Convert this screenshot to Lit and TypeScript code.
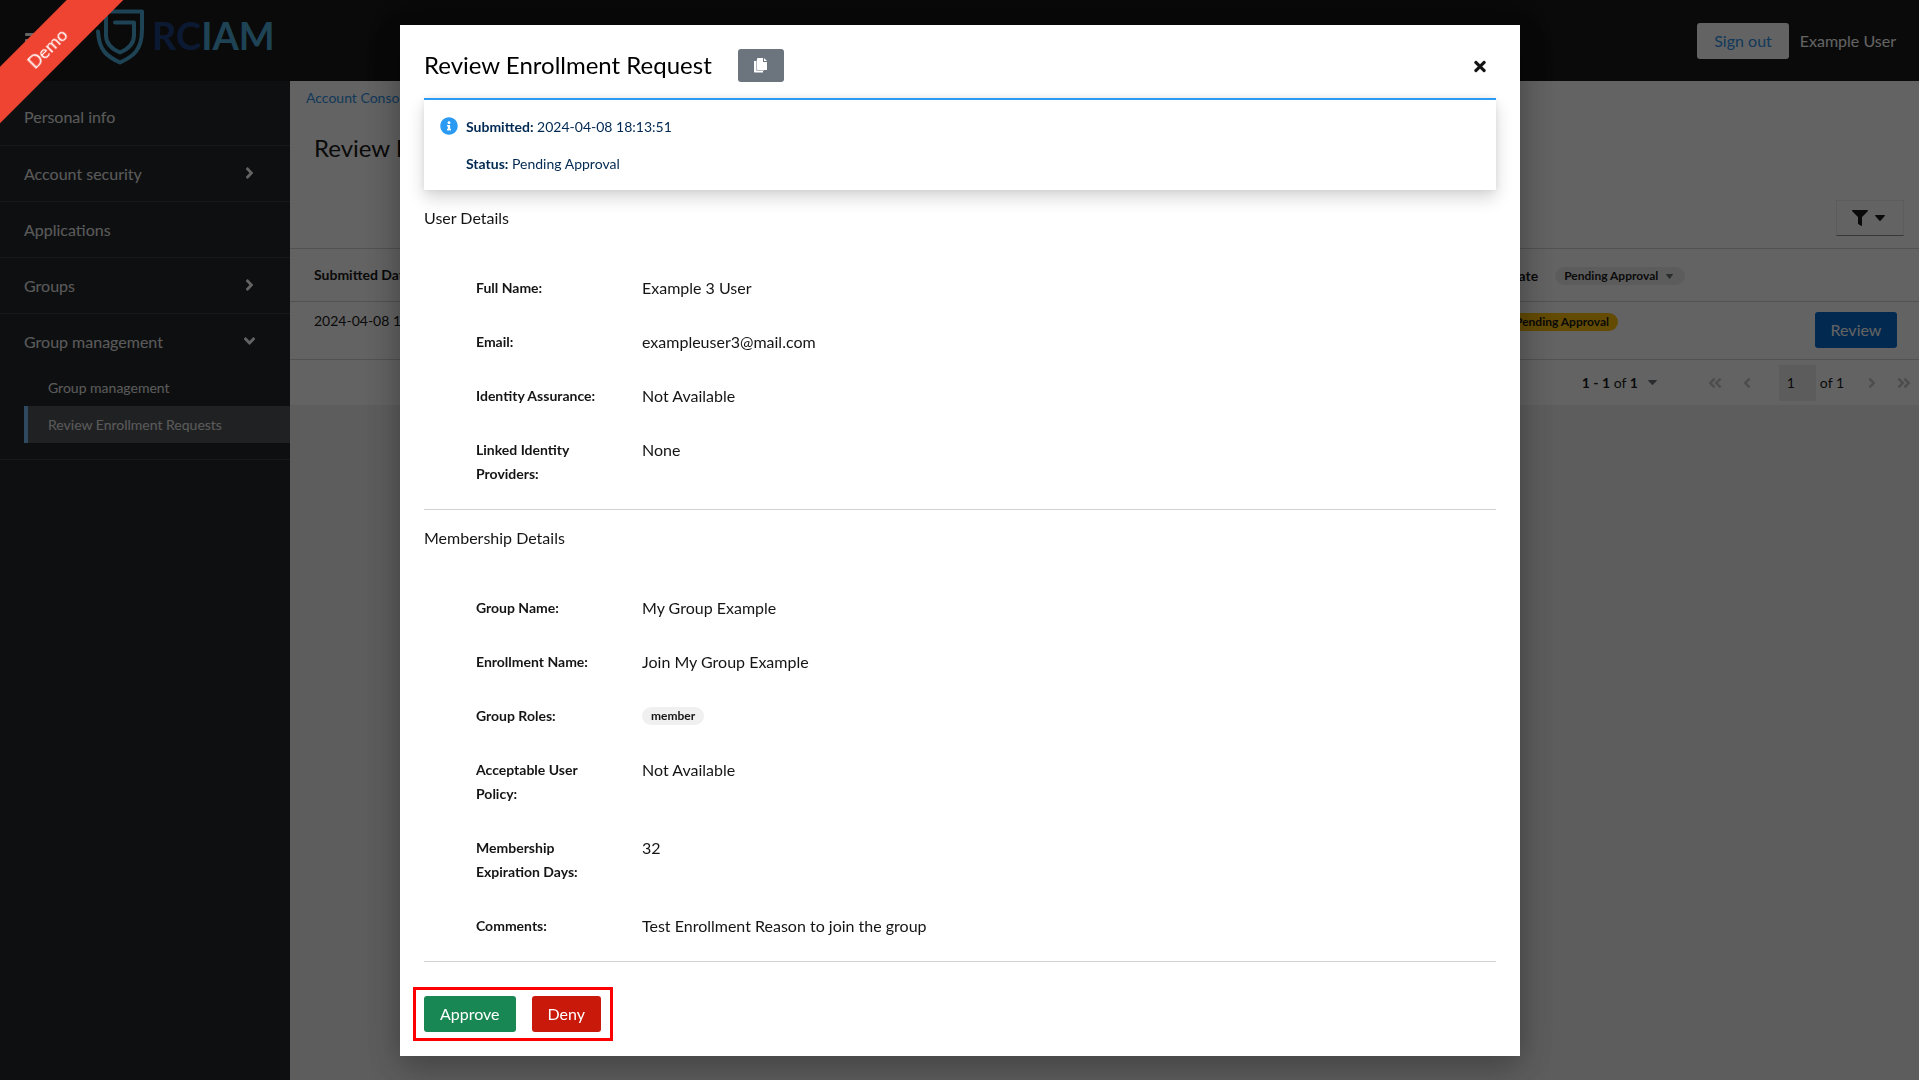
import { LitElement, html, css, svg } from "lit";
import { customElement } from "lit/decorators.js";
import { classMap } from "lit/directives/class-map.js";

const ANGLE =
  "M224.3 273l-136 136c-9.4 9.4-24.6 9.4-33.9 0l-22.6-22.6c-9.4-9.4-9.4-24.6 0-33.9l96.4-96.4-96.4-96.4c-9.4-9.4-9.4-24.6 0-33.9L54.3 103c9.4-9.4 24.6-9.4 33.9 0l136 136c9.5 9.4 9.5 24.6.1 34z";
const DOUBLE_ANGLE =
  "M223.7 239l136-136c9.4-9.4 24.6-9.4 33.9 0l22.6 22.6c9.4 9.4 9.4 24.6 0 33.9L319.9 256l96.4 96.4c9.4 9.4 9.4 24.6 0 33.9L393.7 409c-9.4 9.4-24.6 9.4-33.9 0l-136-136c-9.5-9.4-9.5-24.6-.1-34zm-192 34l136 136c9.4 9.4 24.6 9.4 33.9 0l22.6-22.6c9.4-9.4 9.4-24.6 0-33.9L127.9 256l96.4-96.4c9.4-9.4 9.4-24.6 0-33.9L201.7 103c-9.4-9.4-24.6-9.4-33.9 0l-136 136c-9.5 9.4-9.5 24.6-.1 34z";
const FILTER =
  "M487.976 0H24.028C2.71 0-8.047 25.866 7.058 40.971L192 225.941V432c0 7.831 3.821 15.17 10.237 19.662l80 55.98C298.02 518.69 320 507.493 320 487.98V225.941l184.947-184.97C520.021 25.896 509.338 0 487.976 0z";
const INFO =
  "M256 8C119.043 8 8 119.083 8 256c0 136.997 111.043 248 248 248s248-111.003 248-248C504 119.083 392.957 8 256 8zm0 110c23.196 0 42 18.804 42 42s-18.804 42-42 42-42-18.804-42-42 18.804-42 42-42zm56 254c0 6.627-5.373 12-12 12h-88c-6.627 0-12-5.373-12-12v-24c0-6.627 5.373-12 12-12h12v-64h-12c-6.627 0-12-5.373-12-12v-24c0-6.627 5.373-12 12-12h64c6.627 0 12 5.373 12 12v100h12c6.627 0 12 5.373 12 12v24z";
const TIMES =
  "M242.72 256l100.07-100.07c12.28-12.28 12.28-32.19 0-44.48l-22.24-22.24c-12.28-12.28-32.19-12.28-44.48 0L176 189.28 75.93 89.21c-12.28-12.28-32.19-12.28-44.48 0L9.21 111.45c-12.28 12.28-12.28 32.19 0 44.48L109.28 256 9.21 356.07c-12.28 12.28-12.28 32.19 0 44.48l22.24 22.24c12.28 12.28 32.2 12.28 44.48 0L176 322.72l100.07 100.07c12.28 12.28 32.2 12.28 44.48 0l22.24-22.24c12.28-12.28 12.28-32.19 0-44.48L242.72 256z";

const icon = (path: string, w: number, h: number, vw: number, cls = "") => html`
  <svg class="icon ${cls}" width=${w} height=${h} viewBox="0 0 ${vw} 512" aria-hidden="true">
    ${svg`<path d=${path}></path>`}
  </svg>`;

const caret = (w: number, h: number) => html`
  <svg class="icon" width=${w} height=${h} viewBox="0 0 10 6" preserveAspectRatio="none" aria-hidden="true">
    ${svg`<path d="M.6 0h8.8q.9.3.3 1L5.5 5.7q-.5.5-1 0L.3 1Q-.3.3.6 0z"></path>`}
  </svg>`;

const reset = css`
  * {
    box-sizing: border-box;
    margin: 0;
  }
  ul {
    list-style: none;
    padding: 0;
  }
  a {
    color: inherit;
    text-decoration: none;
  }
  button,
  input {
    font: inherit;
    color: inherit;
    border: 0;
    background: none;
    padding: 0;
  }
  .icon {
    display: block;
    flex: none;
    fill: currentColor;
  }
`;

@customElement("app-header")
class AppHeader extends LitElement {
  static styles = [
    reset,
    css`
      :host {
        display: block;
      }
      .bar {
        display: flex;
        align-items: center;
        justify-content: space-between;
        height: 81px;
        padding: 0 23px 0 24px;
        background: #151515;
        color: #fff;
      }
      .side {
        display: flex;
        align-items: center;
      }
      .burger {
        width: 18px;
        height: 16px;
        margin-right: 53px;
      }
      .logo {
        display: flex;
        align-items: center;
        margin-bottom: 8px;
        color: #4aaad8;
      }
      .shield {
        display: block;
        fill: none;
        stroke: #4aaad8;
        stroke-width: 4;
        stroke-linecap: round;
        stroke-linejoin: round;
      }
      .word {
        margin: 0 0 4px 5px;
        font: 700 38px/48px Lato, sans-serif;
      }
      .deep {
        color: #1c3d82;
      }
      .out {
        height: 36px;
        padding: 0 17px;
        border-radius: 3px;
        background: #fff;
        color: #2b8fe8;
      }
      .user {
        margin-left: 11px;
      }
    `,
  ];
  render() {
    return html`
      <header class="bar">
        <div class="side">
          <button class="burger" aria-label="Menu">
            <svg class="icon" width="18" height="16" viewBox="0 0 18 16">
              <rect x="1" y="0" width="16" height="3" rx="1"></rect>
              <rect x="1" y="6" width="16" height="3" rx="1"></rect>
              <rect x="1" y="12" width="16" height="3" rx="1"></rect>
            </svg>
          </button>
          <a class="logo" href="#home" aria-label="RCIAM">
            <svg class="shield" width="52" height="58" viewBox="0 0 52 58" aria-hidden="true">
              <path d="M20 14.500h19v13q0 11-14 17-14-6-14-17v-24h36v18c0 21-9 27-22 33-13-6-21-12-22-31"></path>
            </svg>
            <span class="word"><span class="deep">RC</span>IAM</span>
          </a>
        </div>
        <div class="side">
          <button class="out">Sign out</button>
          <span class="user">Example User</span>
        </div>
      </header>
    `;
  }
}

type NavEntry = { label: string; open?: boolean; group?: boolean; children?: { label: string; current?: boolean }[] };

const NAV: NavEntry[] = [
  { label: "Personal info" },
  { label: "Account security", group: true },
  { label: "Applications" },
  { label: "Groups", group: true },
  {
    label: "Group management",
    group: true,
    open: true,
    children: [{ label: "Group management" }, { label: "Review Enrollment Requests", current: true }],
  },
];

@customElement("app-nav")
class AppNav extends LitElement {
  static styles = [
    reset,
    css`
      :host {
        display: block;
        width: 290px;
        flex: none;
        padding-top: 8px;
        background: #212427;
        color: #e8e8e8;
      }
      .item {
        border-bottom: 1px solid #3a3d40;
      }
      .row {
        display: flex;
        align-items: center;
        justify-content: space-between;
        width: 100%;
        height: 55px;
        padding: 0 33px 0 24px;
      }
      .item:first-child .row {
        height: 56px;
      }
      .mark {
        width: 16px;
        display: grid;
        place-items: center;
        color: #fff;
        padding-bottom: 2px;
      }
      .down {
        transform: rotate(90deg);
      }
      .sub {
        padding: 0 0 16px 24px;
        font-size: 14px;
      }
      .leaf {
        display: flex;
        align-items: center;
        height: 37px;
        padding-left: 20px;
        border-left: 4px solid transparent;
      }
      .current {
        background: #4f5255;
        border-color: #73bcf7;
      }
    `,
  ];
  render() {
    return html`
      <nav>
        <ul>
          ${NAV.map(
            (n) => html`
              <li class="item">
                ${n.group
                  ? html`<button class="row" aria-expanded=${n.open ? "true" : "false"}>
                      ${n.label}<span class="mark">${icon(ANGLE, 9, 18, 256, n.open ? "down" : "")}</span>
                    </button>`
                  : html`<a class="row" href="#page">${n.label}</a>`}
                ${n.children
                  ? html`<ul class="sub">
                      ${n.children.map(
                        (c) => html`<li>
                          <a class=${classMap({ leaf: true, current: !!c.current })} href="#page">${c.label}</a>
                        </li>`
                      )}
                    </ul>`
                  : ""}
              </li>
            `
          )}
        </ul>
      </nav>
    `;
  }
}

@customElement("request-list")
class RequestList extends LitElement {
  static styles = [
    reset,
    css`
      :host {
        display: block;
        flex: 1;
        min-width: 0;
        color: #151515;
      }
      .panel {
        background: #fff;
        font-size: 14px;
      }
      .crumbs {
        padding: 6px 16px 0;
        line-height: 21px;
        color: #2b8fe8;
      }
      .title {
        padding: 23px 24px 0;
        font-size: 24px;
        line-height: 34px;
        font-weight: 400;
      }
      .tools {
        display: flex;
        justify-content: flex-end;
        padding: 35px 15px 12px 24px;
      }
      .filter {
        display: flex;
        align-items: center;
        gap: 7px;
        width: 68px;
        height: 36px;
        padding: 0 0 0 15px;
        border: 1px solid #ececec;
        border-bottom-color: #8a8d90;
      }
      .table {
        width: 100%;
        table-layout: fixed;
        border-collapse: collapse;
      }
      .first {
        width: 280px;
      }
      .state {
        width: 310px;
      }
      .action {
        width: 119px;
      }
      th,
      td {
        border: solid #d2d2d2;
        border-width: 1px 0;
        padding: 0 16px;
        text-align: left;
      }
      th {
        height: 53px;
        font-weight: 700;
        vertical-align: middle;
      }
      td {
        height: 58px;
        padding-top: 9px;
        vertical-align: top;
        line-height: 20px;
      }
      th:first-child,
      td:first-child {
        padding-left: 24px;
      }
      td:last-child {
        padding-right: 22px;
      }
      .head {
        display: flex;
        align-items: center;
        gap: 17px;
        padding-top: 2px;
      }
      .chip {
        display: flex;
        align-items: center;
        gap: 8px;
        height: 18px;
        padding: 0 12px 0 9px;
        border-radius: 9px;
        background: #ededed;
        font-size: 12px;
        font-weight: 700;
      }
      .caret {
        color: #6a6e73;
      }
      .pending {
        display: inline-block;
        height: 18px;
        padding: 0 9px;
        border-radius: 9px;
        background: #ffc107;
        font-size: 12px;
        line-height: 18px;
        font-weight: 700;
      }
      .review {
        display: block;
        height: 36px;
        width: 100%;
        border-radius: 3px;
        background: #06c;
        color: #fff;
        font-size: 16px;
      }
      .last {
        padding: 10px 22px 0 15px;
      }
      .pages {
        display: flex;
        align-items: center;
        justify-content: flex-end;
        height: 45px;
        padding-right: 1px;
      }
      .range {
        display: flex;
        align-items: center;
        gap: 10px;
        margin-right: 44px;
      }
      .step {
        display: grid;
        place-items: center;
        width: 28px;
        height: 36px;
        color: #c4c6c8;
      }
      .step + .step {
        margin-left: 4px;
      }
      .page {
        width: 37px;
        height: 36px;
        margin: 0 4px 0 18px;
        padding-left: 8px;
        background: #ededed;
      }
      .total {
        margin-right: 14px;
      }
      .flip {
        transform: scaleX(-1);
      }
    `,
  ];
  render() {
    return html`
      <main class="panel">
        <nav class="crumbs"><a href="#console">Account Console</a></nav>
        <h1 class="title">Review Enrollment Requests</h1>
        <div class="tools">
          <button class="filter" aria-label="Filter">${icon(FILTER, 16, 16, 512)}${caret(10, 6)}</button>
        </div>
        <table class="table">
          <colgroup>
            <col class="first" />
            <col />
            <col class="state" />
            <col class="action" />
          </colgroup>
          <thead>
            <tr>
              <th>Submitted Date</th>
              <th></th>
              <th>
                <div class="head">
                  State
                  <button class="chip">Pending Approval<span class="caret">${caret(7, 5)}</span></button>
                </div>
              </th>
              <th></th>
            </tr>
          </thead>
          <tbody>
            <tr>
              <td>2024-04-08 18:13:51</td>
              <td></td>
              <td><span class="pending">Pending Approval</span></td>
              <td class="last"><button class="review">Review</button></td>
            </tr>
          </tbody>
        </table>
        <div class="pages">
          <button class="range">
            <span><b>1 - 1</b> of <b>1</b></span><span class="caret">${caret(9, 5)}</span>
          </button>
          <button class="step" aria-label="First page">${icon(DOUBLE_ANGLE, 14, 16, 448)}</button>
          <button class="step" aria-label="Previous page">${icon(ANGLE, 8, 16, 256, "flip")}</button>
          <input class="page" type="text" value="1" aria-label="Page" />
          <span class="total">of 1</span>
          <button class="step" aria-label="Next page">${icon(ANGLE, 8, 16, 256)}</button>
          <button class="step" aria-label="Last page">${icon(DOUBLE_ANGLE, 14, 16, 448, "flip")}</button>
        </div>
      </main>
    `;
  }
}

type Field = { label: string; value: string; badge?: boolean };

const USER: Field[] = [
  { label: "Full Name:", value: "Example 3 User" },
  { label: "Email:", value: "exampleuser3@mail.com" },
  { label: "Identity Assurance:", value: "Not Available" },
  { label: "Linked Identity Providers:", value: "None" },
];

const MEMBERSHIP: Field[] = [
  { label: "Group Name:", value: "My Group Example" },
  { label: "Enrollment Name:", value: "Join My Group Example" },
  { label: "Group Roles:", value: "member", badge: true },
  { label: "Acceptable User Policy:", value: "Not Available" },
  { label: "Membership Expiration Days:", value: "32" },
  { label: "Comments:", value: "Test Enrollment Reason to join the group" },
];

@customElement("review-dialog")
class ReviewDialog extends LitElement {
  static styles = [
    reset,
    css`
      :host {
        display: block;
        width: min(1120px, 100%);
        padding: 24px 24px 15px;
        background: #fff;
        color: #151515;
        box-shadow: 0 16px 32px 0 rgba(3, 3, 3, 0.16), 0 0 32px 0 rgba(3, 3, 3, 0.2);
      }
      .top {
        display: flex;
        align-items: center;
        height: 33px;
        margin: 0 9px 16px 0;
      }
      .title {
        font-size: 24px;
        line-height: 32px;
        font-weight: 400;
        color: #000;
      }
      .copy {
        display: grid;
        place-items: center;
        width: 46px;
        height: 33px;
        margin-left: 26px;
        border-radius: 3px;
        background: #6c757d;
      }
      .close {
        margin-left: auto;
        padding: 3px 1px 0;
      }
      .alert {
        display: flex;
        gap: 8px;
        padding: 16px;
        border-top: 2px solid #2b9af3;
        background: #fff;
        box-shadow: 0 8px 16px 0 rgba(3, 3, 3, 0.16), 0 0 6px 0 rgba(3, 3, 3, 0.08);
        color: #002952;
        font-size: 14px;
        line-height: 21px;
      }
      .alert .icon {
        margin-top: 1px;
        color: #2b9af3;
      }
      .lines {
        display: grid;
        gap: 16px;
      }
      .section {
        padding: 16px 0 23px;
        border-bottom: 1px solid #d2d2d2;
      }
      .name {
        font-size: 16px;
        line-height: 24px;
        font-weight: 400;
      }
      .fields {
        display: grid;
        gap: 30px;
        padding: 46px 0 0 52px;
      }
      .field {
        display: grid;
        grid-template-columns: 136px 1fr;
        column-gap: 30px;
        line-height: 24px;
      }
      dt {
        font-size: 14px;
        font-weight: 700;
      }
      dd {
        display: flex;
        align-items: center;
        height: 24px;
      }
      .badge {
        height: 18px;
        padding: 0 9px;
        border-radius: 9px;
        background: #f0f0f0;
        font-size: 12px;
        line-height: 18px;
        font-weight: 700;
      }
      .actions {
        display: flex;
        gap: 16px;
        width: fit-content;
        margin: 25px 0 0 -11px;
        padding: 6px 9px 6px 8px;
        border: 3px solid #f00;
      }
      .act {
        height: 36px;
        padding: 0 16px;
        border-radius: 3px;
        color: #fff;
      }
      .approve {
        background: #198754;
      }
      .deny {
        background: #c9190b;
      }
    `,
  ];
  section(name: string, fields: Field[]) {
    return html`
      <section class="section">
        <h2 class="name">${name}</h2>
        <dl class="fields">
          ${fields.map(
            (f) => html`<div class="field">
              <dt>${f.label}</dt>
              <dd>${f.badge ? html`<span class="badge">${f.value}</span>` : f.value}</dd>
            </div>`
          )}
        </dl>
      </section>
    `;
  }
  render() {
    return html`
      <div class="top">
        <h1 class="title">Review Enrollment Request</h1>
        <button class="copy" aria-label="Copy link">
          <svg class="icon" width="13" height="15" viewBox="0 0 13 15" aria-hidden="true">
            <path d="M0 3h3v8.500h6V14.500H.8Q0 14.500 0 13.700z" fill="#fff"></path>
            <path d="M4 0h5v4h4V12H4Q3 12 3 11V1Q3 0 4 0z" fill="#fff"></path>
            <path d="M10 0l3 3h-3z" fill="#fff"></path>
            <path d="M2.500 2.500V12.500H10" fill="none" stroke="#b4b9bd"></path>
          </svg>
        </button>
        <button class="close" aria-label="Close">${icon(TIMES, 12, 17, 352)}</button>
      </div>
      <div class="alert">
        ${icon(INFO, 18, 18, 512)}
        <div class="lines">
          <p><b>Submitted:</b> 2024-04-08 18:13:51</p>
          <p><b>Status:</b> Pending Approval</p>
        </div>
      </div>
      ${this.section("User Details", USER)} ${this.section("Membership Details", MEMBERSHIP)}
      <div class="actions">
        <button class="act approve">Approve</button>
        <button class="act deny">Deny</button>
      </div>
    `;
  }
}

@customElement("app-root")
class AppRoot extends LitElement {
  static styles = [
    reset,
    css`
      :host {
        display: block;
        font: 400 16px/24px Lato, "Liberation Sans", sans-serif;
      }
      .page {
        display: flex;
        flex-direction: column;
        height: 100vh;
        overflow: hidden;
        background: #f0f0f0;
      }
      .body {
        display: flex;
        flex: 1;
      }
      .backdrop {
        position: fixed;
        inset: 0;
        display: flex;
        align-items: center;
        justify-content: center;
        padding-left: 1px;
        background: rgba(3, 3, 3, 0.62);
      }
      .ribbon {
        position: fixed;
        top: 28px;
        left: -53px;
        width: 200px;
        height: 40px;
        transform: rotate(-45deg);
        background: #f04433;
        color: #fff;
        font-size: 18px;
        line-height: 40px;
        text-align: center;
      }
    `,
  ];
  render() {
    return html`
      <div class="page">
        <app-header></app-header>
        <div class="body">
          <app-nav></app-nav>
          <request-list></request-list>
        </div>
      </div>
      <div class="backdrop">
        <review-dialog role="dialog" aria-modal="true"></review-dialog>
      </div>
      <div class="ribbon">Demo</div>
    `;
  }
}
